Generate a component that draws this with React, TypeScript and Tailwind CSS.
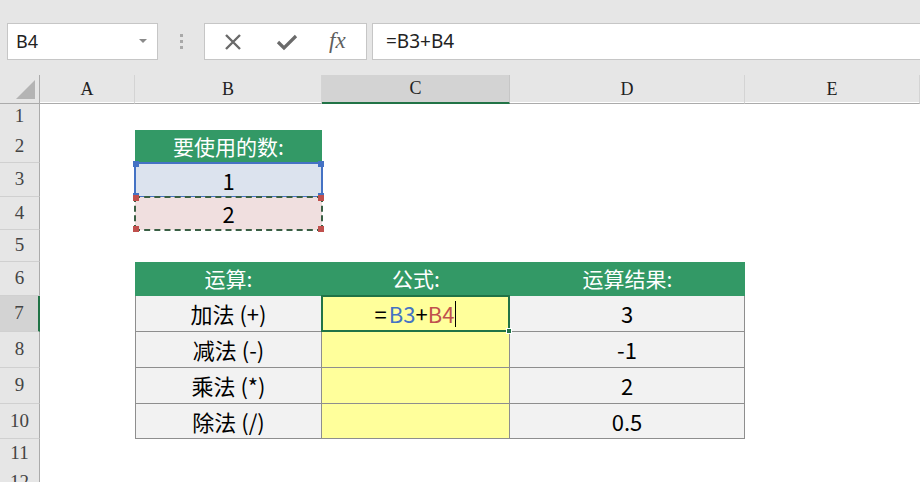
import React from 'react';

const rowHeights = [
  'h-[28px]', 'h-[33px]', 'h-[34px]', 'h-[33px]', 'h-[32px]', 'h-[34px]',
  'h-[36px]', 'h-[36px]', 'h-[36px]', 'h-[35px]', 'h-[29px]', 'h-[20px]',
];

const cols = 'grid grid-cols-[40px_95px_187px_188px_235px_175px]';
const cjk = "font-['Noto_Sans_CJK_SC','Noto_Sans',sans-serif]";
const serif = "font-['Liberation_Serif','DejaVu_Serif',serif]";

const ops = [
  { label: '加法 (+)', result: '3' },
  { label: '减法 (-)', result: '-1' },
  { label: '乘法 (*)', result: '2' },
  { label: '除法 (/)', result: '0.5' },
];

function Corners({ color }: { color: string }) {
  return (
    <>
      <span className={`absolute -left-[3px] -top-[3px] w-[6px] h-[6px] ${color}`} />
      <span className={`absolute -right-[3px] -top-[3px] w-[6px] h-[6px] ${color}`} />
      <span className={`absolute -left-[3px] -bottom-[3px] w-[6px] h-[6px] ${color}`} />
      <span className={`absolute -right-[3px] -bottom-[3px] w-[6px] h-[6px] ${color}`} />
    </>
  );
}

function Toolbar() {
  return (
    <div className="h-[75px] bg-[#e6e6e6] flex items-start pt-[23px]">
      {/* Name box */}
      <div className="ml-[7px] w-[151px] h-[37px] bg-white border border-[#c6c6c6] flex items-center justify-between pl-[8px] pr-[10px]">
        <span className="text-[18px] text-[#222] font-['Noto_Sans',sans-serif]">B4</span>
        <svg width="8" height="5" viewBox="0 0 8 5"><path d="M0 0 L8 0 L4 4 Z" fill="#8a8a8a" /></svg>
      </div>
      <div className="w-[46px] h-[37px] flex flex-col items-center justify-center gap-[3px]">
        <span className="w-[3px] h-[3px] bg-[#a9a9a9]" />
        <span className="w-[3px] h-[3px] bg-[#a9a9a9]" />
        <span className="w-[3px] h-[3px] bg-[#a9a9a9]" />
      </div>
      {/* Function buttons */}
      <div className="w-[163px] h-[37px] bg-white border border-[#c6c6c6] flex items-center">
        <svg className="ml-[19px]" width="18" height="18" viewBox="0 0 18 18">
          <path d="M2 2 L16 16 M16 2 L2 16" stroke="#6a6a6a" strokeWidth="2.4" />
        </svg>
        <svg className="ml-[34px]" width="22" height="18" viewBox="0 0 22 18">
          <path d="M2 9 L8 15 L20 3" stroke="#6a6a6a" strokeWidth="3.2" fill="none" />
        </svg>
        <span className={`ml-[31px] text-[23px] italic text-[#5f5f5f] ${serif}`}>fx</span>
      </div>
      {/* Formula input */}
      <div className="ml-[5px] flex-1 h-[37px] bg-white border-y border-l border-[#c6c6c6] flex items-center pl-[13px]">
        <span className="text-[19px] text-[#222] font-['Noto_Sans',sans-serif]">=B3+B4</span>
      </div>
    </div>
  );
}

function ColumnHeader() {
  const letters = ['A', 'B', 'C', 'D', 'E'];
  return (
    <div className={`${cols} h-[27px] bg-[#e6e6e6]`}>
      <div className="relative border-r border-b border-[#ababab]">
        <svg className="absolute right-[4px] bottom-[4px]" width="19" height="19" viewBox="0 0 19 19">
          <path d="M19 0 L19 19 L0 19 Z" fill="#b4b4b4" />
        </svg>
      </div>
      {letters.map((l) => (
        <div
          key={l}
          className={`flex items-center justify-center text-[18px] text-[#222] ${serif} ${
            l === 'C'
              ? 'bg-[#d3d3d3] border-b-2 border-b-[#217346] border-r border-r-[#c6c6c6]'
              : 'border-b border-b-[#ababab] border-r border-r-[#d4d4d4]'
          }`}
        >
          {l}
        </div>
      ))}
    </div>
  );
}

function RowHeader({ n }: { n: number }) {
  const sel = n === 7;
  return (
    <div
      className={`flex items-center justify-center text-[19px] text-[#444] ${serif} border-b border-b-[#d0d0d0] ${
        sel ? 'bg-[#d3d3d3] border-r-2 border-r-[#217346]' : 'bg-[#e6e6e6] border-r border-r-[#ababab]'
      }`}
    >
      {n}
    </div>
  );
}

const green = `bg-[#339966] text-white text-[21px] ${cjk} flex items-center justify-center`;
const cellText = `text-[22px] text-black ${cjk} flex items-center justify-center`;
const grayCell = 'bg-[#f2f2f2] border-r border-b border-[#8e8e8e]';

function SheetRow({ n }: { n: number }) {
  let a: React.ReactNode = <div />;
  let b: React.ReactNode = <div />;
  let c: React.ReactNode = <div />;
  let d: React.ReactNode = <div />;

  if (n === 2) b = <div className={green}>要使用的数:</div>;
  if (n === 3)
    b = (
      <div className={`relative bg-[#dce3ee] ${cellText}`}>
        1
        <div className="absolute -inset-x-[1px] -top-[1px] -bottom-[1px] border-2 border-[#4472c4]">
          <Corners color="bg-[#4472c4]" />
        </div>
      </div>
    );
  if (n === 4)
    b = (
      <div className={`relative bg-[#f0dfdf] ${cellText}`}>
        2
        <div className="absolute -inset-x-[1px] -top-[1px] -bottom-[1px] border-2 border-dashed border-[#3a5f44]">
          <Corners color="bg-[#c0504d]" />
        </div>
      </div>
    );
  if (n === 6) {
    b = <div className={green}>运算:</div>;
    c = <div className={green}>公式:</div>;
    d = <div className={green}>运算结果:</div>;
  }
  if (n >= 7 && n <= 10) {
    const op = ops[n - 7];
    b = <div className={`${grayCell} border-l ${cellText}`}>{op.label}</div>;
    c =
      n === 7 ? (
        <div className={`relative bg-[#ffff9b] border-r border-b border-[#8e8e8e] ${cellText}`}>
          <span className="flex items-center">
            <span className="mr-[2px]">=</span>
            <span className="text-[#4472c4]">B3</span>
            <span>+</span>
            <span className="text-[#c0504d]">B4</span>
            <span className="ml-[1px] w-[1px] h-[26px] bg-black" />
          </span>
          <div className="absolute -left-[1px] -right-[1px] -top-[1px] -bottom-[1px] border-2 border-[#217346]">
            <span className="absolute -right-[4px] -bottom-[4px] w-[6px] h-[6px] bg-[#217346] border border-white" />
          </div>
        </div>
      ) : (
        <div className="bg-[#ffff9b] border-r border-b border-[#8e8e8e]" />
      );
    d = <div className={`${grayCell} ${cellText}`}>{op.result}</div>;
  }

  return (
    <div className={`${cols} ${rowHeights[n - 1]}`}>
      <RowHeader n={n} />
      {a}
      {b}
      {c}
      {d}
      <div />
    </div>
  );
}

export default function App() {
  return (
    <div className="w-[920px] h-[482px] overflow-hidden bg-white">
      <Toolbar />
      <ColumnHeader />
      {Array.from({ length: 12 }, (_, i) => (
        <SheetRow key={i} n={i + 1} />
      ))}
    </div>
  );
}
